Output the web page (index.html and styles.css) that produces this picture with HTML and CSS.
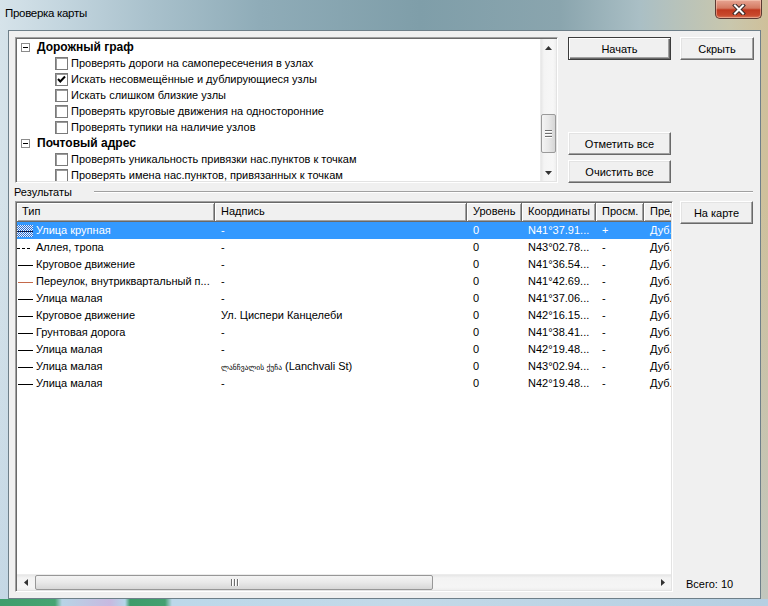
FILE: index.html
```html
<!DOCTYPE html>
<html lang="ru">
<head>
<meta charset="utf-8">
<title>Проверка карты</title>
<link rel="stylesheet" href="styles.css">
</head>
<body>
<div class="window">
  <div class="titlebar">
    <span class="title">Проверка карты</span>
    <div class="close">
      <svg width="14" height="11" viewBox="0 0 14 11"><path d="M3 1.5 L11 9.5 M11 1.5 L3 9.5" stroke="#3a2a28" stroke-width="4" stroke-linecap="square"/><path d="M3 1.5 L11 9.5 M11 1.5 L3 9.5" stroke="#ffffff" stroke-width="2" stroke-linecap="square"/></svg>
    </div>
  </div>
  <div class="client">
    <div class="top">
      <div class="tree sunken">
        <div class="tree-list">
          <div class="node"><span class="minus"></span><b>Дорожный граф</b></div>
          <div class="item"><span class="cb"></span>Проверять дороги на самопересечения в узлах</div>
          <div class="item"><span class="cb"><svg width="11" height="11" viewBox="0 0 11 11"><path d="M2 5 L4.3 7.5 L9 2.5" fill="none" stroke="#000" stroke-width="2"/></svg></span>Искать несовмещённые и дублирующиеся узлы</div>
          <div class="item"><span class="cb"></span>Искать слишком близкие узлы</div>
          <div class="item"><span class="cb"></span>Проверять круговые движения на односторонние</div>
          <div class="item"><span class="cb"></span>Проверять тупики на наличие узлов</div>
          <div class="node"><span class="minus"></span><b>Почтовый адрес</b></div>
          <div class="item"><span class="cb"></span>Проверять уникальность привязки нас.пунктов к точкам</div>
          <div class="item"><span class="cb"></span>Проверять имена нас.пунктов, привязанных к точкам</div>
        </div>
        <div class="vscroll">
          <div class="arrow-v"><svg width="7" height="4" viewBox="0 0 7 4"><path d="M0 4 L3.5 0 L7 4 Z" fill="#333"/></svg></div>
          <div class="vtrack">
            <div class="vthumb"><span></span><span></span><span></span></div>
          </div>
          <div class="arrow-v"><svg width="7" height="4" viewBox="0 0 7 4"><path d="M0 0 L3.5 4 L7 0 Z" fill="#333"/></svg></div>
        </div>
      </div>
      <div class="top-buttons">
        <div class="btn-row">
          <button class="btn default wide">Начать</button>
          <button class="btn narrow">Скрыть</button>
        </div>
        <div class="btn-stack">
          <button class="btn wide">Отметить все</button>
          <button class="btn wide">Очистить все</button>
        </div>
      </div>
    </div>
    <div class="group"><span>Результаты</span><span class="etch"></span></div>
    <div class="bottom">
      <div class="table sunken">
        <div class="grid head">
          <div class="hc first">Тип</div>
          <div class="hc">Надпись</div>
          <div class="hc">Уровень</div>
          <div class="hc">Координаты</div>
          <div class="hc">Просм.</div>
          <div class="hc last">Пред</div>
        </div>
        <div class="rows">
          <div class="grid row selected">
            <div class="c type"><span class="ico checker"><i></i></span>Улица крупная</div>
            <div class="c">-</div><div class="c">0</div><div class="c">N41°37.91...</div><div class="c">+</div><div class="c">Дуб.</div>
          </div>
          <div class="grid row">
            <div class="c type"><span class="ico dashed"></span>Аллея, тропа</div>
            <div class="c">-</div><div class="c">0</div><div class="c">N43°02.78...</div><div class="c">-</div><div class="c">Дуб.</div>
          </div>
          <div class="grid row">
            <div class="c type"><span class="ico solid"></span>Круговое движение</div>
            <div class="c">-</div><div class="c">0</div><div class="c">N41°36.54...</div><div class="c">-</div><div class="c">Дуб.</div>
          </div>
          <div class="grid row">
            <div class="c type"><span class="ico solid brown"></span>Переулок, внутриквартальный п...</div>
            <div class="c">-</div><div class="c">0</div><div class="c">N41°42.69...</div><div class="c">-</div><div class="c">Дуб.</div>
          </div>
          <div class="grid row">
            <div class="c type"><span class="ico solid"></span>Улица малая</div>
            <div class="c">-</div><div class="c">0</div><div class="c">N41°37.06...</div><div class="c">-</div><div class="c">Дуб.</div>
          </div>
          <div class="grid row">
            <div class="c type"><span class="ico solid"></span>Круговое движение</div>
            <div class="c">Ул. Циспери Канцелеби</div><div class="c">0</div><div class="c">N42°16.15...</div><div class="c">-</div><div class="c">Дуб.</div>
          </div>
          <div class="grid row">
            <div class="c type"><span class="ico solid"></span>Грунтовая дорога</div>
            <div class="c">-</div><div class="c">0</div><div class="c">N41°38.41...</div><div class="c">-</div><div class="c">Дуб.</div>
          </div>
          <div class="grid row">
            <div class="c type"><span class="ico solid"></span>Улица малая</div>
            <div class="c">-</div><div class="c">0</div><div class="c">N42°19.48...</div><div class="c">-</div><div class="c">Дуб.</div>
          </div>
          <div class="grid row">
            <div class="c type"><span class="ico solid"></span>Улица малая</div>
            <div class="c"><span class="geo">ლანჩვალის ქუჩა</span> (Lanchvali St)</div><div class="c">0</div><div class="c">N43°02.94...</div><div class="c">-</div><div class="c">Дуб.</div>
          </div>
          <div class="grid row">
            <div class="c type"><span class="ico solid"></span>Улица малая</div>
            <div class="c">-</div><div class="c">0</div><div class="c">N42°19.48...</div><div class="c">-</div><div class="c">Дуб.</div>
          </div>
        </div>
        <div class="hscroll">
          <div class="arrow-h"><svg width="4" height="7" viewBox="0 0 4 7"><path d="M4 0 L0 3.5 L4 7 Z" fill="#333"/></svg></div>
          <div class="htrack">
            <div class="hthumb"><span></span><span></span><span></span></div>
          </div>
          <div class="arrow-h"><svg width="4" height="7" viewBox="0 0 4 7"><path d="M0 0 L4 3.5 L0 7 Z" fill="#333"/></svg></div>
        </div>
      </div>
      <div class="side">
        <button class="btn map">На карте</button>
        <div class="total">Всего: 10</div>
      </div>
    </div>
  </div>
</div>
</body>
</html>
```

FILE: styles.css
```css
* { box-sizing: border-box; }
html, body { margin: 0; padding: 0; }
body {
  width: 768px;
  height: 606px;
  overflow: hidden;
  font-family: "Liberation Sans", Arial, sans-serif;
  font-size: 11px;
  color: #000;
}
.window {
  width: 768px;
  height: 606px;
  display: flex;
  flex-direction: column;
  padding: 0 7px 7px 8px;
  background:
    linear-gradient(to right, #3f9d6c 0, #46a472 55px, #b7d4e6 62px, #c7b9e0 110px, #b6d6ea 125px, #3d9b6a 130px, #44a070 165px, #bcd8ea 172px, #c3d9e8 400px, #b5cfe2 768px) left bottom / 100% 7px no-repeat,
    linear-gradient(to bottom, rgba(255,255,255,0) 0, rgba(255,255,255,0) 200px, rgba(180,205,225,0.5) 606px),
    linear-gradient(to right, #d6e3ea 0, #c4d6df 60px, #a9c1cc 150px, #8facb8 260px, #7f9ea9 420px, #8aa5ae 560px, #aabfc5 640px, #c9c7ad 730px, #cfc09a 768px);
}
.titlebar {
  height: 30px;
  display: flex;
  align-items: flex-start;
}
.title {
  margin: 7px 0 0 -3px;
  font-family: "Liberation Sans", Arial, sans-serif;
  font-size: 11.5px;
  letter-spacing: -0.3px;
  color: #000;
}
.close {
  margin-left: auto;
  margin-right: -1px;
  width: 47px;
  height: 19px;
  border: 1px solid #5c3a33;
  border-top: none;
  border-radius: 0 0 5px 5px;
  background: linear-gradient(to bottom, #e7a593 0, #d47a62 45%, #c0391f 55%, #c9492c 85%, #d87a5c 100%);
  box-shadow: inset 0 0 0 1px rgba(255,220,200,0.45);
  display: flex;
  align-items: center;
  justify-content: center;
}
.close svg { display: block; }

.client {
  flex: 1;
  background: #f0f0f0;
  border: 1px solid #6e7f89;
  padding: 6px;
  display: flex;
  flex-direction: column;
}
.top {
  display: flex;
  height: 146px;
}
.sunken {
  border: 1px solid;
  border-color: #a0a0a0 #ffffff #ffffff #a0a0a0;
  box-shadow: inset 1px 1px 0 #696969, inset -1px -1px 0 #e3e3e3;
  padding: 1px;
  background: #fff;
}
.tree {
  width: 543px;
  display: flex;
  overflow: hidden;
}
.tree-list {
  flex: 1;
  overflow: hidden;
}
.node, .item {
  height: 16px;
  display: flex;
  align-items: center;
  white-space: nowrap;
}
.node { padding-left: 4px; font-size: 12px; }
.node b { font-weight: bold; }
.minus {
  width: 9px;
  height: 9px;
  border: 1px solid #8b8b8b;
  background: #fff;
  margin-right: 7px;
  display: flex;
  align-items: center;
  justify-content: center;
}
.minus::after {
  content: "";
  width: 5px;
  height: 1px;
  background: #000;
}
.item { padding-left: 38px; }
.cb {
  width: 13px;
  height: 13px;
  border: 1px solid #7a7a7a;
  box-shadow: inset 1px 1px 0 #9a9a9a;
  background: #fff;
  margin-right: 3px;
  display: flex;
  align-items: center;
  justify-content: center;
  flex: none;
}
.cb svg { display: block; }

.vscroll {
  width: 16px;
  display: flex;
  flex-direction: column;
  background: linear-gradient(to right, #e6e6e6 0, #f4f4f4 3px, #f7f7f7 12px, #ececec 16px);
  border-left: 1px solid #ececec;
}
.arrow-v {
  height: 17px;
  display: flex;
  align-items: center;
  justify-content: center;
}
.vtrack {
  flex: 1;
  display: flex;
  flex-direction: column;
  justify-content: flex-end;
  padding-bottom: 11px;
}
.vthumb {
  height: 39px;
  border: 1px solid #9a9a9a;
  border-radius: 2px;
  background: linear-gradient(to right, #f4f4f4 0, #e8e8e8 50%, #d6d6d6 100%);
  display: flex;
  flex-direction: column;
  align-items: center;
  justify-content: center;
  gap: 2px;
}
.vthumb span {
  width: 7px;
  height: 1px;
  background: #707070;
  box-shadow: 0 1px 0 #fff;
}

.top-buttons {
  margin-left: 10px;
  display: flex;
  flex-direction: column;
  justify-content: space-between;
}
.btn-row { display: flex; gap: 9px; }
.btn-stack { display: flex; flex-direction: column; gap: 5px; }
.btn {
  font-family: "Liberation Sans", Arial, sans-serif;
  font-size: 11px;
  color: #000;
  height: 23px;
  padding: 0;
  border: 1px solid;
  border-color: #ffffff #696969 #696969 #ffffff;
  box-shadow: inset -1px -1px 0 #a0a0a0, inset 1px 1px 0 #e3e3e3;
  background: #f0f0f0;
  border-radius: 0;
}
.btn.default {
  border-color: #3c3c3c;
  box-shadow: inset 1px 1px 0 #ffffff, inset -1px -1px 0 #696969, inset -2px -2px 0 #a0a0a0;
}
.wide { width: 103px; }
.narrow { width: 74px; }

.group {
  height: 18px;
  display: flex;
  align-items: center;
  margin-left: -1px;
}
.etch {
  flex: 1;
  margin-left: 22px;
  margin-right: 1px;
  height: 2px;
  border-top: 1px solid #a0a0a0;
  border-bottom: 1px solid #ffffff;
}

.bottom {
  flex: 1;
  display: flex;
  gap: 7px;
  min-height: 0;
}
.table {
  width: 658px;
  display: flex;
  flex-direction: column;
  overflow: hidden;
}
.grid {
  display: grid;
  grid-template-columns: 198px 252px 55px 74px 48px 27px;
}
.head { height: 19px; }
.hc {
  background: #f0f0f0;
  border-right: 1px solid #696969;
  border-bottom: 1px solid #696969;
  box-shadow: inset 1px 1px 0 #ffffff, inset -1px -1px 0 #a0a0a0;
  padding-left: 6px;
  line-height: 17px;
  white-space: nowrap;
  overflow: hidden;
}
.hc.first { padding-left: 5px; }
.hc.last { border-right: none; box-shadow: inset 1px 1px 0 #ffffff, inset 0 -1px 0 #a0a0a0; }
.rows { flex: 1; overflow: hidden; }
.row { height: 17px; line-height: 17px; }
.row.selected { background: #3399ff; color: #fff; }
.c {
  padding-left: 6px;
  white-space: nowrap;
  overflow: hidden;
}
.c.type {
  padding-left: 0;
  display: flex;
  align-items: center;
}
.ico {
  width: 16px;
  height: 12px;
  margin-right: 3px;
  position: relative;
  flex: none;
}
.ico.solid::after {
  content: "";
  position: absolute;
  left: 1px;
  right: 0;
  top: 6px;
  height: 1px;
  background: #000;
}
.ico.brown::after { background: #c4694a; }
.ico.dashed::after {
  content: "";
  position: absolute;
  left: 0;
  width: 14px;
  top: 6px;
  height: 1px;
  background: repeating-linear-gradient(to right, #000 0 3px, transparent 3px 5px);
}
.ico.checker {
  background: repeating-conic-gradient(#eaf4ff 0 25%, #2f6fd0 0 50%) 0 0 / 2px 2px;
}
.ico.checker i {
  position: absolute;
  left: 0;
  right: 0;
  top: 6px;
  height: 1px;
  background: #0b1b4a;
}
.geo {
  font-family: "DejaVu Sans", sans-serif;
  font-size: 7.5px;
}

.hscroll {
  height: 16px;
  display: flex;
  background: linear-gradient(to bottom, #e6e6e6 0, #f3f3f3 3px, #f5f5f5 12px, #ebebeb 16px);
  border-top: 1px solid #ececec;
}
.arrow-h {
  width: 17px;
  display: flex;
  align-items: center;
  justify-content: center;
}
.htrack {
  flex: 1;
  padding-left: 1px;
}
.hthumb {
  width: 398px;
  height: 15px;
  border: 1px solid #979797;
  border-radius: 2px;
  background: linear-gradient(to bottom, #f4f4f4 0, #e9e9e9 50%, #d7d7d7 100%);
  display: flex;
  align-items: center;
  justify-content: center;
  gap: 2px;
}
.hthumb span {
  width: 1px;
  height: 7px;
  background: #707070;
  box-shadow: 1px 0 0 #fff;
}

.side {
  width: 74px;
  display: flex;
  flex-direction: column;
  justify-content: space-between;
}
.btn.map { width: 73px; }
.total {
  padding-left: 6px;
  line-height: 14px;
  margin-bottom: 1px;
}
```
